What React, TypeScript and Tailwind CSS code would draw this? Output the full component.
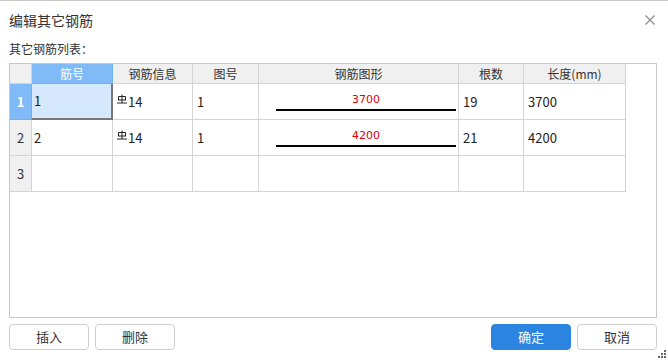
import React from 'react';

const FONT = { fontFamily: '"Microsoft YaHei", "Noto Sans CJK SC", "Noto Sans", sans-serif' };

interface RebarRow {
  no: string;
  dia: string;
  shape: string;
  length: string;
  count: string;
}

const rows: RebarRow[] = [
  { no: '1', dia: '14', shape: '1', length: '3700', count: '19' },
  { no: '2', dia: '14', shape: '1', length: '4200', count: '21' },
];

// HRB400 grade symbol
function GradeIcon() {
  return (
    <svg width="10" height="10" viewBox="0 0 10 10" className="mr-[1px] -mt-[5px]" fill="none" stroke="#222" strokeWidth="1">
      <path d="M5 0.5V9" />
      <path d="M1.5 6V2.5H8.5V6" />
      <path d="M1 6H9" />
      <path d="M0 9H10" />
    </svg>
  );
}

function Btn({ label, primary }: { label: string; primary?: boolean }) {
  return (
    <button
      className={`w-[80px] h-[26px] rounded-[4px] text-[13px] ${
        primary ? 'bg-[#2c84e1] text-white border border-[#2c84e1]' : 'bg-white text-[#333] border border-[#cfcfcf]'
      }`}
    >
      {label}
    </button>
  );
}

const cell = 'border-r border-b border-[#d4d4d4] flex items-center text-[13px] text-[#222]';
const head = 'border-r border-b border-[#d4d4d4] bg-[#f0f0f0] flex items-center justify-center text-[12px] text-[#333]';

export default function App() {
  return (
    <div className="w-[668px] h-[361px] bg-white border-t border-[#c8c8c8] relative overflow-hidden" style={FONT}>
      {/* Title bar */}
      <div className="flex items-center justify-between h-[38px] pl-[9px] pr-[13px]">
        <span className="text-[14px] text-[#333]">编辑其它钢筋</span>
        <svg width="10" height="10" viewBox="0 0 10 10" stroke="#8a8a8a" strokeWidth="1.2" className="-mt-[1px]">
          <path d="M0.5 0.5L9.5 9.5M9.5 0.5L0.5 9.5" />
        </svg>
      </div>

      <div className="pl-[9px] text-[12px] text-[#333] leading-[18px] mt-[1px]">其它钢筋列表：</div>

      {/* Table */}
      <div className="ml-[9px] mt-[5px] w-[648px] h-[255px] border border-[#c8c8c8]">
        <div className="grid grid-cols-[22px_81px_80px_66px_200px_65px_102px] grid-rows-[20px_36px_36px_36px] w-[616px]">
          <div className={head}></div>
          <div className="border-r border-b border-[#6fb0f5] bg-[#80bbf8] flex items-center justify-center text-[12px] text-white">筋号</div>
          <div className={head}>钢筋信息</div>
          <div className={head}>图号</div>
          <div className={head}>钢筋图形</div>
          <div className={head}>根数</div>
          <div className={head}>长度(mm)</div>

          {rows.map((r, i) => (
            <React.Fragment key={r.no}>
              {i === 0 ? (
                <div className="border-r border-b border-[#6fb0f5] bg-[#80bbf8] flex items-center justify-center text-[13px] font-bold text-white">
                  {i + 1}
                </div>
              ) : (
                <div className="border-r border-b border-[#d4d4d4] bg-[#f0f0f0] flex items-center justify-center text-[13px] text-[#333]">
                  {i + 1}
                </div>
              )}
              {i === 0 ? (
                <div className="border-r-2 border-b-2 border-[#777] bg-[#d6e8fc] flex items-center pl-[2px] text-[13px] text-[#222]">
                  {r.no}
                </div>
              ) : (
                <div className={`${cell} pl-[2px]`}>{r.no}</div>
              )}
              <div className={`${cell} pl-[4px]`}>
                <GradeIcon />
                {r.dia}
              </div>
              <div className={`${cell} pl-[4px]`}>{r.shape}</div>
              <div className="border-r border-b border-[#d4d4d4] flex flex-col items-stretch justify-center pl-[17px] pr-[2px]">
                <div className="text-center text-[11px] leading-[13px] text-[#e00000] mt-[1px]" style={{ fontFamily: 'Tahoma, "DejaVu Sans", sans-serif' }}>
                  {r.length}
                </div>
                <div className="h-[2px] bg-black mt-[3px]"></div>
              </div>
              <div className={`${cell} pl-[4px]`}>{r.count}</div>
              <div className={`${cell} pl-[4px]`}>{r.length}</div>
            </React.Fragment>
          ))}

          <div className="border-r border-b border-[#d4d4d4] bg-[#f0f0f0] flex items-center justify-center text-[13px] text-[#333]">3</div>
          <div className={cell}></div>
          <div className={cell}></div>
          <div className={cell}></div>
          <div className={cell}></div>
          <div className={cell}></div>
          <div className={cell}></div>
        </div>
      </div>

      {/* Footer */}
      <div className="flex items-center justify-between pl-[9px] pr-[11px] mt-[6px]">
        <div className="flex gap-[6px]">
          <Btn label="插入" />
          <Btn label="删除" />
        </div>
        <div className="flex gap-[6px]">
          <Btn label="确定" primary />
          <Btn label="取消" />
        </div>
      </div>

      {/* resize grip */}
      <svg width="9" height="9" viewBox="0 0 9 9" fill="#666" className="absolute right-[1px] bottom-[2px]">
        <rect x="6" y="0" width="2" height="2" />
        <rect x="3" y="3" width="2" height="2" />
        <rect x="6" y="3" width="2" height="2" />
        <rect x="0" y="6" width="2" height="2" />
        <rect x="3" y="6" width="2" height="2" />
        <rect x="6" y="6" width="2" height="2" />
      </svg>
    </div>
  );
}
